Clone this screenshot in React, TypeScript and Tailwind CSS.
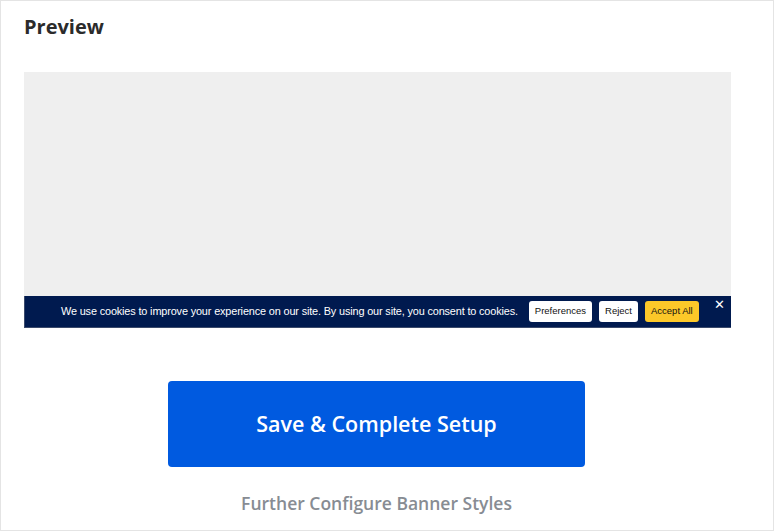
export default function App() {
  return (
    <div className="w-[775px] h-[532px] bg-white" style={{ fontFamily: '"Open Sans", "Noto Sans", sans-serif' }}>
      <div className="w-[774px] h-[531px] border border-[#e4e4e4] flex flex-col">
        <h2 className="pl-[23px] pt-[12px] text-[20px] leading-[28px] font-bold text-[#2b2b2b]">Preview</h2>

        <div className="mt-[31px] ml-[23px] w-[707px] h-[256px] bg-[#efefef] flex flex-col justify-end">
          <div className="relative h-[32px] bg-[#001a4f] border-b border-l border-[#3b4a6b] flex items-center" style={{ fontFamily: '"Liberation Sans", Arial, sans-serif' }}>
            <p className="ml-[36px] text-[10.9px] text-white tracking-[-0.15px]">
              We use cookies to improve your experience on our site. By using our site, you consent to cookies.
            </p>
            <div className="ml-[11px] flex items-center gap-[7px]">
              <button className="h-[21px] px-[6px] bg-white rounded-[3px] text-[9.5px] text-[#111]">Preferences</button>
              <button className="h-[21px] px-[6px] bg-white rounded-[3px] text-[9.5px] text-[#111]">Reject</button>
              <button className="h-[21px] px-[6px] bg-[#fcc829] rounded-[3px] text-[9.5px] text-[#111]">Accept All</button>
            </div>
            <span className="absolute right-[6px] top-[1px] text-white text-[13px] leading-[16px]">✕</span>
          </div>
        </div>

        <div className="mt-[53px] ml-[167px] w-[417px] flex flex-col items-center">
          <button className="w-[417px] h-[86px] bg-[#005ae0] rounded-[4px] text-white text-[21.5px] font-semibold">
            Save &amp; Complete Setup
          </button>
          <a className="mt-[23px] text-[17.5px] font-semibold text-[#878c93]">Further Configure Banner Styles</a>
        </div>
      </div>
    </div>
  );
}
